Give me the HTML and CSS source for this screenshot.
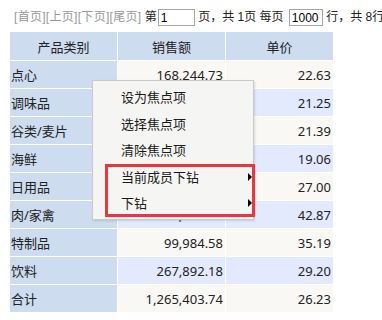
FILE: index.html
```html
<!DOCTYPE html>
<html lang="zh-CN">
<head>
    <meta charset="UTF-8">
    <title>产品类别销售额</title>
    <link rel="stylesheet" href="styles.css">
</head>
<body>
    <div class="pager">
        <span class="nav-links">[首页][上页][下页][尾页]</span> 第<input class="page-input" type="text" value="1"> 页，共 1页 每页 <input class="size-input" type="text" value="1000"> 行，共 8行
    </div>

    <div class="report">
        <table class="grid">
            <thead>
                <tr><th>产品类别</th><th>销售额</th><th>单价</th></tr>
            </thead>
            <tbody>
                <tr><td class="name">点心</td><td>168,244.73</td><td>22.63</td></tr>
                <tr class="alt"><td class="name">调味品</td><td>106,047.08</td><td>21.25</td></tr>
                <tr><td class="name">谷类/麦片</td><td>95,744.59</td><td>21.39</td></tr>
                <tr class="alt"><td class="name">海鲜</td><td>131,261.74</td><td>19.06</td></tr>
                <tr><td class="name">日用品</td><td>234,507.28</td><td>27.00</td></tr>
                <tr class="alt"><td class="name">肉/家禽</td><td>163,022.36</td><td>42.87</td></tr>
                <tr><td class="name">特制品</td><td>99,984.58</td><td>35.19</td></tr>
                <tr class="alt"><td class="name">饮料</td><td>267,892.18</td><td>29.20</td></tr>
                <tr><td class="name">合计</td><td>1,265,403.74</td><td>26.23</td></tr>
            </tbody>
        </table>

        <ul class="context-menu">
            <li>设为焦点项</li>
            <li>选择焦点项</li>
            <li>清除焦点项</li>
            <li class="sub">当前成员下钻</li>
            <li class="sub">下钻</li>
        </ul>
        <div class="highlight"></div>
    </div>
</body>
</html>
```

FILE: styles.css
```css
body {
    margin: 0;
    background: #fff;
    color: #222;
    font-family: "Noto Sans", "Noto Sans CJK SC", sans-serif;
    overflow: hidden;
}
.pager {
    height: 31px;
    box-sizing: border-box;
    padding: 3px 0 0 14px;
    line-height: 28px;
    font-family: "Liberation Sans", "Noto Sans CJK SC", sans-serif;
    font-size: 12px;
    color: #222;
    white-space: nowrap;
    overflow: hidden;
}
.nav-links {
    color: #999;
    letter-spacing: 0.3px;
}
.pager input {
    height: 17px;
    box-sizing: border-box;
    margin: 0;
    padding: 0 2px;
    border: 1px solid #a5a5a5;
    font-family: "Liberation Sans", sans-serif;
    font-size: 12px;
    color: #000;
    vertical-align: middle;
}
.page-input {
    width: 37px;
    margin-left: 1px !important;
}
.size-input {
    width: 34px;
    margin-left: 2px !important;
}
.report {
    position: relative;
}
.grid {
    margin-left: 9px;
    border-spacing: 1px;
    table-layout: fixed;
    width: 325px;
    font-size: 13px;
}
.grid th,
.grid td {
    width: 107px;
    box-sizing: border-box;
    padding: 0 2px;
    white-space: nowrap;
}
.grid th {
    height: 28px;
    background: #cedcef;
    font-weight: normal;
    text-align: center;
}
.grid td {
    height: 27px;
    background: #f9f8f4;
    text-align: right;
}
.grid tr.alt td {
    background: #e4eafd;
}
.grid td.name,
.grid tr.alt td.name {
    background: #cedcef;
    text-align: left;
    padding-left: 1px;
}
.context-menu {
    position: absolute;
    left: 92px;
    top: 49px;
    width: 162px;
    box-sizing: border-box;
    margin: 0;
    padding: 3px 0 2px;
    list-style: none;
    background: #f5f5f3;
    border: 1px solid #c9c9c9;
    box-shadow: 1px 1px 2px rgba(0, 0, 0, 0.12);
    font-size: 13px;
    color: #1a1a1a;
}
.context-menu li {
    position: relative;
    height: 26.5px;
    line-height: 26.5px;
    padding-left: 28px;
}
.context-menu li.sub::after {
    content: "";
    position: absolute;
    right: 1px;
    top: 9px;
    border-left: 4px solid #000;
    border-top: 4px solid transparent;
    border-bottom: 4px solid transparent;
}
.highlight {
    position: absolute;
    left: 105px;
    top: 133px;
    width: 150px;
    height: 53px;
    box-sizing: border-box;
    border: 3px solid #e8383d;
}
```
